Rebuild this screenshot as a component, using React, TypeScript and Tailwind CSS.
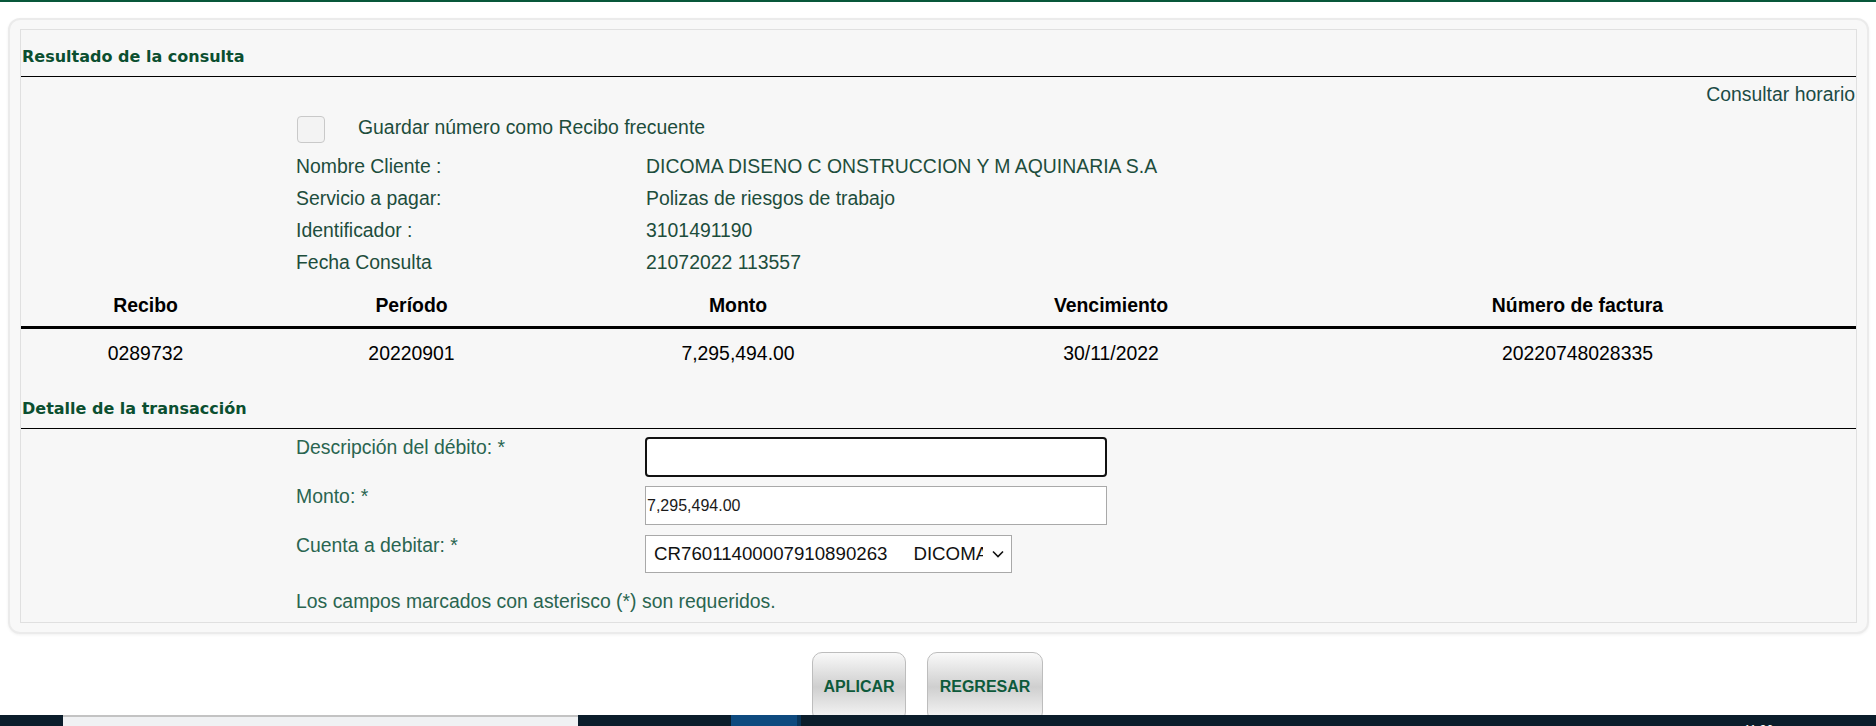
import React from 'react';

const info: [string, string][] = [
  ['Nombre Cliente :', 'DICOMA DISENO C ONSTRUCCION Y M AQUINARIA S.A'],
  ['Servicio a pagar:', 'Polizas de riesgos de trabajo'],
  ['Identificador :', '3101491190'],
  ['Fecha Consulta', '21072022 113557'],
];

const columns = ['Recibo', 'Período', 'Monto', 'Vencimiento', 'Número de factura'];
const receipt = ['0289732', '20220901', '7,295,494.00', '30/11/2022', '20220748028335'];

const SectionTitle: React.FC<{ children: React.ReactNode; className?: string }> = ({ children, className }) => (
  <h2
    className={`border-b border-black pb-[9px] pl-[1px] font-['DejaVu_Sans',sans-serif] text-[16px] font-bold leading-[20px] text-[#0b4f30] ${className ?? ''}`}
  >
    {children}
  </h2>
);

export default function App() {
  return (
    <div className="flex h-[726px] flex-col overflow-hidden bg-white font-['Liberation_Sans',Arial,sans-serif] text-[19.4px] leading-[22px]">
      {/* top accent bar */}
      <div className="h-[2px] bg-[#08573a]" />

      {/* panel */}
      <div className="ml-[8px] mr-[7px] mt-[16px] rounded-[12px] border-2 border-[#ebebeb] bg-[#f8f8f8] px-[10px] pb-[9px] pt-[9px] shadow-[0_1px_3px_rgba(0,0,0,0.06)]">
        <div className="border border-[#e0e0e0] bg-[#f7f7f7] pb-[10px]">
          <SectionTitle className="pt-[17px]">Resultado de la consulta</SectionTitle>

          <div className="mt-[6px] pr-[1px] text-right text-[#1b4b45]">Consultar horario</div>

          {/* client info */}
          <div className="pl-[275px] text-[#1d4d3c]">
            <div className="mt-[11px] flex items-start">
              <input
                type="checkbox"
                className="ml-[1px] h-[27px] w-[28px] appearance-none rounded-[4px] border border-[#c9c9c9] bg-[#f3f3f3]"
              />
              <span className="ml-[33px]">Guardar número como Recibo frecuente</span>
            </div>
            <div className="mt-[12px] grid grid-cols-[350px_1fr] gap-y-[10px]">
              {info.map(([label, value]) => (
                <React.Fragment key={label}>
                  <span>{label}</span>
                  <span>{value}</span>
                </React.Fragment>
              ))}
            </div>
          </div>

          {/* receipts table */}
          <table className="mt-[11px] w-full table-fixed border-collapse text-black">
            <colgroup>
              <col className="w-[249px]" />
              <col className="w-[283px]" />
              <col className="w-[370px]" />
              <col className="w-[376px]" />
              <col />
            </colgroup>
            <thead>
              <tr>
                {columns.map((c) => (
                  <th key={c} className="border-b-[3px] border-black pb-[10px] pt-[10px] text-center font-bold">
                    {c}
                  </th>
                ))}
              </tr>
            </thead>
            <tbody>
              <tr>
                {receipt.map((v) => (
                  <td key={v} className="pb-[13px] pt-[13px] text-center">
                    {v}
                  </td>
                ))}
              </tr>
            </tbody>
          </table>

          <SectionTitle className="pt-[22px]">Detalle de la transacción</SectionTitle>

          {/* transaction form */}
          <div className="mt-[8px] flex flex-col pl-[275px] text-[#2a6550]">
            <div className="grid grid-cols-[349px_1fr] items-start">
              <label className="-mt-[1px]">Descripción del débito: *</label>
              <input
                type="text"
                className="h-[40px] w-[462px] rounded-[4px] border-2 border-[#111] bg-white outline-none"
              />
            </div>
            <div className="mt-[9px] grid grid-cols-[349px_1fr] items-start">
              <label className="-mt-[1px]">Monto: *</label>
              <input
                type="text"
                defaultValue="7,295,494.00"
                className="h-[39px] w-[462px] border border-[#a9a9a9] bg-white px-[1px] text-[16px] text-[#1a1a1a] outline-none"
              />
            </div>
            <div className="mt-[10px] grid grid-cols-[349px_1fr] items-start">
              <label className="-mt-[1px]">Cuenta a debitar: *</label>
              <div className="relative w-[367px]">
                <select className="h-[38px] w-full appearance-none border border-[#a9a9a9] bg-white pl-[8px] pr-[28px] text-[18.7px] text-[#111] outline-none">
                  <option>{'CR76011400007910890263\u00a0\u00a0\u00a0\u00a0\u00a0DICOMA DISENO C ONSTRUCCION Y M AQUINARIA S.A'}</option>
                </select>
                <svg
                  className="pointer-events-none absolute right-[8px] top-[15px]"
                  width="12"
                  height="8"
                  viewBox="0 0 12 8"
                  fill="none"
                  stroke="#111"
                  strokeWidth="1.6"
                >
                  <path d="M1 1.5l5 5 5-5" />
                </svg>
              </div>
            </div>
            <p className="mt-[17px]">Los campos marcados con asterisco (*) son requeridos.</p>
          </div>
        </div>
      </div>

      {/* actions */}
      <div className="mt-[18px] flex h-[63px] items-start justify-center gap-[21px] overflow-hidden pr-[21px]">
        <button className="h-[70px] w-[94px] shrink-0 rounded-[10px] border border-[#bdbdbd] bg-linear-to-b from-[#f9f9f9] via-[#cfcfcf] to-[#f9f9f9] text-[16px] font-bold text-[#0d5a3b]">
          APLICAR
        </button>
        <button className="h-[70px] w-[116px] shrink-0 rounded-[10px] border border-[#bdbdbd] bg-linear-to-b from-[#f9f9f9] via-[#cfcfcf] to-[#f9f9f9] text-[16px] font-bold text-[#0d5a3b]">
          REGRESAR
        </button>
      </div>

      {/* taskbar strip */}
      <div className="flex h-[11px] shrink-0 overflow-hidden bg-[#0b1d2b]">
        <div className="w-[63px]" />
        <div className="w-[515px] border-t-2 border-[#c3c3c3] bg-[#f0f1f3]" />
        <div className="w-[153px]" />
        <div className="w-[66px] bg-[#0e4a7f]" />
        <div className="w-[4px] bg-[#0a3559]" />
        <div className="flex-1" />
        <div className="w-[74px] pt-[8px] text-[12px] leading-[14px] text-white">11:36 a. m.</div>
        <div className="w-[58px]" />
      </div>
    </div>
  );
}
